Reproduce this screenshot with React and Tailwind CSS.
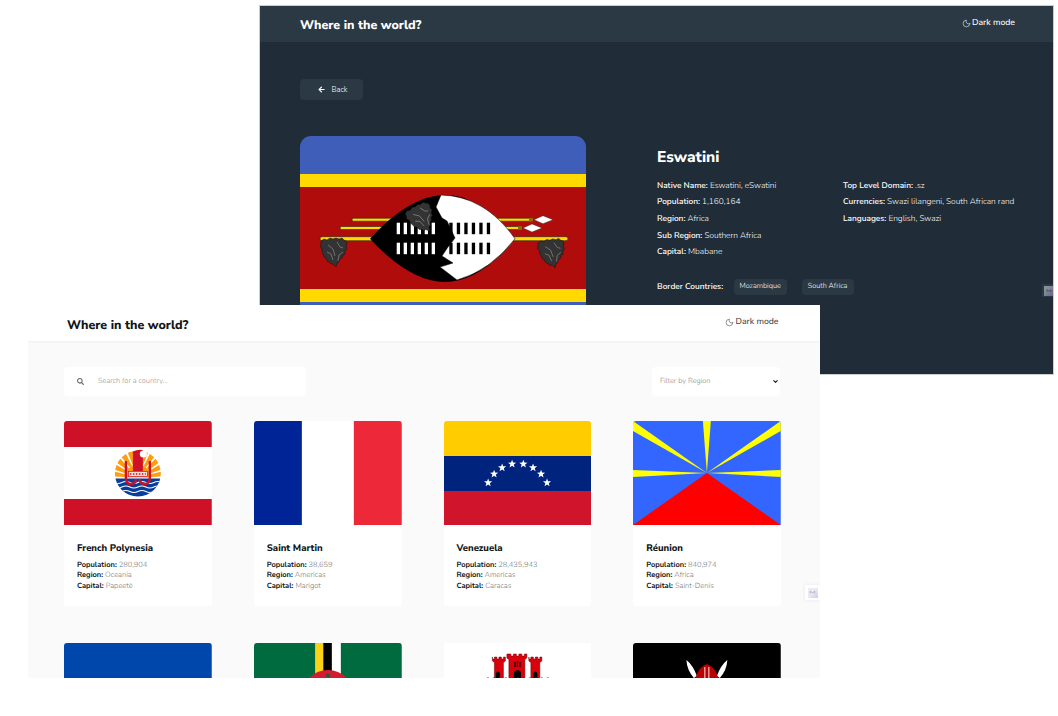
import React from 'react';
import { Moon, ChevronDown } from 'lucide-react';
import { FaArrowLeft, FaSearch } from 'react-icons/fa';

const font = "font-['Nunito_Sans','Lato','Open_Sans',sans-serif] [text-rendering:geometricPrecision]";

const countries = [
  { name: 'French Polynesia', population: '280,904', region: 'Oceania', capital: 'Papeetē', flag: 'pf' },
  { name: 'Saint Martin', population: '38,659', region: 'Americas', capital: 'Marigot', flag: 'mf' },
  { name: 'Venezuela', population: '28,435,943', region: 'Americas', capital: 'Caracas', flag: 've' },
  { name: 'Réunion', population: '840,974', region: 'Africa', capital: 'Saint-Denis', flag: 're' },
];

// second row is cut off by the window, only the flags show
const moreFlags = ['cw', 'dm', 'gi', 'ke'];

const Star = ({ x, y, r = 3.2, fill = '#fff' }) => {
  const pts = [];
  for (let i = 0; i < 10; i++) {
    const a = (Math.PI / 5) * i - Math.PI / 2;
    const rad = i % 2 === 0 ? r : r * 0.42;
    pts.push(`${x + rad * Math.cos(a)},${y + rad * Math.sin(a)}`);
  }
  return <polygon points={pts.join(' ')} fill={fill} />;
};

const sunRays = () => {
  const rays = [];
  for (let i = 0; i < 11; i++) {
    const a = Math.PI + (Math.PI * (i + 0.5)) / 11;
    const w = 0.105;
    const pt = (r, t) => `${74 + r * Math.cos(t)},${56.5 + r * Math.sin(t)}`;
    rays.push(
      <polygon key={i} points={`${pt(13, a - w)} ${pt(27, a - w)} ${pt(27, a + w)} ${pt(13, a + w)}`} fill="#ff9c10" />
    );
  }
  return rays;
};

const PolynesiaEmblem = () => (
  <>
    <clipPath id="pf-circle">
      <circle cx="74" cy="52.500" r="23" />
    </clipPath>
    <g clipPath="url(#pf-circle)">
      {sunRays()}
      <path d="M61 56.500a13 13 0 0 1 26 0z" fill="#ff9c10" />
      <rect x="50" y="57.500" width="48" height="19" fill="#083d9c" />
      <path d="M50 61.500q4 2 8 0t8 0 8 0 8 0 8 0 8 0M50 66q4 2 8 0t8 0 8 0 8 0 8 0 8 0M50 70.500q4 2 8 0t8 0 8 0 8 0 8 0 8 0" fill="none" stroke="#fff" strokeWidth="1.100" />
    </g>
    <path d="M69 30.500q5-2.500 10-1.500v21H69z" fill="#ce1126" />
    <circle cx="79.500" cy="33" r="3.600" fill="#fff" />
    <rect x="64.500" y="50.500" width="19" height="5" fill="#f5ddd0" stroke="#ce1126" strokeWidth="0.700" />
    <path d="M66 53h16" stroke="#ce1126" strokeWidth="1.500" strokeDasharray="1.500 1.500" />
    <path d="M62 40v16q0 7 5 7t5-5" fill="none" stroke="#ce1126" strokeWidth="2.400" />
    <path d="M86 40v16q0 7-5 7t-5-5" fill="none" stroke="#ce1126" strokeWidth="2.400" />
  </>
);

// all card flags share a 148x104 box
const Flag = ({ code }) => {
  let inner = null;
  if (code === 'pf') {
    inner = (
      <>
        <rect width="148" height="104" fill="#fff" />
        <rect width="148" height="26" fill="#ce1126" />
        <rect y="78" width="148" height="26" fill="#ce1126" />
        <PolynesiaEmblem />
      </>
    );
  }
  if (code === 'mf') {
    inner = (
      <>
        <rect width="48" height="104" fill="#002395" />
        <rect x="48" width="52" height="104" fill="#fff" />
        <rect x="100" width="48" height="104" fill="#ed2939" />
      </>
    );
  }
  if (code === 've') {
    const stars = [[44.200, 61.700], [50.200, 53], [58.200, 46.700], [68.200, 43], [79.500, 43], [89.200, 46.700], [97.200, 53], [103.200, 61.700]];
    inner = (
      <>
        <rect width="148" height="35" fill="#fc0" />
        <rect y="35" width="148" height="35" fill="#00247d" />
        <rect y="70" width="148" height="34" fill="#cf142b" />
        {stars.map(([x, y], i) => <Star key={i} x={x} y={y} r={4.300} />)}
      </>
    );
  }
  if (code === 're') {
    inner = (
      <>
        <rect width="148" height="104" fill="#36f" />
        <path d="M0 0L74 52L0 10zM148 0L74 52L148 10zM70 0h8L74 52zM0 49L74 52L0 56zM148 49L74 52L148 56z" fill="#ff0" />
        <path d="M0 104L74 52L148 104z" fill="#f00" />
      </>
    );
  }
  if (code === 'cw') inner = <rect width="148" height="104" fill="#0047ab" />;
  if (code === 'dm') {
    inner = (
      <>
        <rect width="148" height="104" fill="#006b3f" />
        <rect x="61.200" width="8.400" height="104" fill="#fcd116" />
        <rect x="69.600" width="8.400" height="104" fill="#000" />
        <rect x="78" width="9" height="104" fill="#fff" />
        <circle cx="74" cy="53.500" r="26.500" fill="#d41c30" />
        <Star x={74} y={32.700} r={3.200} fill="#006b3f" />
      </>
    );
  }
  if (code === 'gi') {
    inner = (
      <>
        <rect width="148" height="104" fill="#fff" />
        <g fill="#da000c" stroke="#6b0006" strokeWidth="0.500">
          <path d="M48.500 14v4l2 1.500V36h9V19.500l2-1.500v-4h-2v2h-2v-2h-2.500v2h-2v-2h-2.500v2h-2v-2z" />
          <path d="M63 11v4l2 1.500V36h16V16.500l2-1.500v-4h-2.500v2h-2.500v-2h-3v2h-2.500v-2h-3v2h-2.500v-2z" />
          <path d="M85 14v4l2 1.500V36h9V19.500l2-1.500v-4h-2v2h-2v-2h-2.500v2h-2v-2h-2.500v2h-2v-2z" />
        </g>
        <path d="M52 36v-6q2-3 4 0v6zM70 36v-7q3.500-4 7 0v7zM89.500 36v-6q2-3 4 0v6z" fill="#000" />
        <path d="M70.500 19h1.200v5h-1.200zM73 18h1.200v6H73zM75.500 19h1.200v5h-1.200z" fill="#000" />
        <path d="M43 35h62" stroke="#da000c" strokeWidth="1" strokeDasharray="2 4" />
      </>
    );
  }
  if (code === 'ke') {
    inner = (
      <>
        <rect width="148" height="104" fill="#000" />
        <path d="M53.500 17Q60 22 64 33l-3 2Q54 27 53.500 17zM94.500 17Q88 22 84 33l3 2Q94 27 94.500 17z" fill="#fff" />
        <path d="M74 21q10 4 12 17H62q2-13 12-17z" fill="#bb0000" />
        <path d="M72 24v14M76 24v14" stroke="#fff" strokeWidth="0.900" />
      </>
    );
  }
  return (
    <svg viewBox="0 0 148 104" preserveAspectRatio="none" className="block h-[104px] w-full">
      {inner}
    </svg>
  );
};

const Leaf = ({ x, y, rotate = 0 }) => (
  <g transform={`translate(${x} ${y}) rotate(${rotate})`}>
    <path d="M-11 -11l3 1 3-2 3 1 3-1 3 1 3-1 2 2 2 1 1 3-1 2 1 3-2 2 0 3-2 1-1 3-2 1-1 3-2 1-1 4-3-3-2 0-2-2-2-1-1-3-2-1-1-3-1-2 0-3-2-3 1-2 0-3z" fill="#333" stroke="#111" strokeWidth="0.500" />
    <path d="M-7 -5l5 4 2 7M2 -8l3 5 3 1M-8 2l4 2 2 6M8 2l-4 3-1 6" stroke="#8a8a8a" strokeWidth="0.700" fill="none" />
  </g>
);

const Spear = ({ y, x1, x2, head, thick = 3 }) => (
  <g>
    <rect x={x1} y={y - thick / 2} width={x2 - x1} height={thick} rx={thick / 2} fill="#ffd900" stroke="#222" strokeWidth="0.600" />
    {head && (
      <>
        <rect x={x2 - 4} y={y - 1.800} width="4" height="3.600" fill="#8a6d00" />
        <path d={`M${x2 + 1} ${y}l9 -4 10 4 -10 4z`} fill="#fff" stroke="#222" strokeWidth="0.400" />
      </>
    )}
  </g>
);

// Eswatini flag, 286x204 like the picture
const EswatiniFlag = () => {
  const bars = [0, 1, 2, 3, 4, 5];
  return (
    <svg viewBox="0 0 286 204" className="block h-[204px] w-[286px]">
      <rect width="286" height="204" fill="#3e5eb9" />
      <rect y="38" width="286" height="128" fill="#ffd900" />
      <rect y="51" width="286" height="102" fill="#b10c0c" />
      <Spear y={83.700} x1={52} x2={233} head />
      <Spear y={92} x1={40} x2={222} head />
      <Spear y={102.700} x1={20} x2={268} thick={4} />
      <path d="M70 102.700Q110 59 145 59T215 102.700Q180 146 145 146T70 102.700z" fill="#000" />
      <path d="M141 59Q185 60 215 102.700Q190 135 157 144l-17-13 13-4-11-7 6-9 7-9-8-17-5-3-6-11z" fill="#fff" stroke="#000" strokeWidth="0.500" />
      {bars.map((i) => (
        <rect key={i} x={96.700 + i * 7} y={86.700} width="3.300" height="11.500" fill="#fff" />
      ))}
      {bars.map((i) => (
        <rect key={i} x={96.700 + i * 7} y={106.700} width="3.300" height="11.500" fill="#fff" />
      ))}
      {bars.map((i) => (
        <rect key={i} x={149.300 + i * 7.500} y={86.700} width="3.300" height="11.500" fill="#000" />
      ))}
      {bars.map((i) => (
        <rect key={i} x={149.300 + i * 7.500} y={106.700} width="3.300" height="11.500" fill="#000" />
      ))}
      <Leaf x={121.700} y={80} rotate={-25} />
      <Leaf x={35} y={114} />
      <Leaf x={252.700} y={115} rotate={-5} />
    </svg>
  );
};

const Info = ({ label, value }) => (
  <p className="h-[16.600px] leading-[16.600px]">
    <span className="font-semibold">{label}:</span> <span className="font-light">{value}</span>
  </p>
);

const BadgeMark = ({ className }) => (
  <svg viewBox="0 0 10 10" className={className}>
    <path d="M2.500 6V3.500L5 5.500 7.500 3.500V6" fill="none" stroke="currentColor" strokeWidth="0.800" />
  </svg>
);

const DarkMode = ({ className }) => (
  <div className={`flex items-center gap-[1px] text-[8.700px] font-medium ${className}`}>
    <Moon className="h-[9px] w-[9px]" strokeWidth={1.500} />
    Dark mode
  </div>
);

const DarkWindow = () => (
  <div className={`absolute left-[260px] top-[6px] h-[368px] w-[793px] overflow-hidden bg-[#202c37] text-white shadow-[0_0_0_1px_#c9ced2] ${font}`}>
    <header className="flex h-[36px] items-center justify-between bg-[#2b3945] pl-[40px] pr-[38px]">
      <h1 className="pt-[5px] text-[12.500px] font-extrabold">Where in the world?</h1>
      <DarkMode className="text-white" />
    </header>
    <div className="pl-[40px] pt-[37px]">
      <button className="flex h-[21px] w-[63px] items-center justify-center gap-[6px] rounded-sm bg-[#2b3945] pl-[3px] text-[7.500px] font-light text-white">
        <FaArrowLeft className="h-[7px] w-[7px]" />
        Back
      </button>
      <div className="mt-[36px] flex gap-[71px]">
        <div className="overflow-hidden rounded-t-[11px]">
          <EswatiniFlag />
        </div>
        <div className="pt-[10px] text-[8.300px]">
          <h2 className="text-[15.500px] font-extrabold">Eswatini</h2>
          <div className="mt-[8.500px] flex">
            <div className="w-[186px]">
              <Info label="Native Name" value="Eswatini, eSwatini" />
              <Info label="Population" value="1,160,164" />
              <Info label="Region" value="Africa" />
              <Info label="Sub Region" value="Southern Africa" />
              <Info label="Capital" value="Mbabane" />
            </div>
            <div>
              <Info label="Top Level Domain" value=".sz" />
              <Info label="Currencies" value="Swazi lilangeni, South African rand" />
              <Info label="Languages" value="English, Swazi" />
            </div>
          </div>
          <div className="mt-[18px] flex items-center">
            <span className="font-semibold">Border Countries:</span>
            <span className="ml-[10.500px] flex h-[16px] w-[53px] items-center justify-center rounded-sm bg-[#2b3945] text-[7.300px] font-light">Mozambique</span>
            <span className="ml-[15px] flex h-[16px] w-[52px] items-center justify-center rounded-sm bg-[#2b3945] text-[7.300px] font-light">South Africa</span>
          </div>
        </div>
      </div>
    </div>
    <div className="absolute right-0 top-[278px] flex h-[13px] w-[11px] items-center justify-end bg-[#2b3945]">
      <div className="flex h-[10px] w-[9px] items-center justify-center bg-gradient-to-br from-[#8c93a2] via-[#7d8494] to-[#6d5a98] text-[#2b3945]">
        <BadgeMark className="h-[8px] w-[8px]" />
      </div>
    </div>
  </div>
);

const Stat = ({ label, value }) => (
  <p>
    <span className="font-bold">{label}:</span> <span className="font-light text-[#777]">{value}</span>
  </p>
);

const Card = ({ c }) => (
  <article className="h-[185px] overflow-hidden rounded-[3px] bg-white">
    <Flag code={c.flag} />
    <div className="pl-[13px] pt-[17px] text-[7.500px] leading-[10.500px] text-[#111517]">
      <h3 className="mb-[3.500px] text-[9.500px] font-extrabold leading-[14px]">{c.name}</h3>
      <Stat label="Population" value={c.population} />
      <Stat label="Region" value={c.region} />
      <Stat label="Capital" value={c.capital} />
    </div>
  </article>
);

const LightWindow = () => (
  <div className={`absolute left-[28px] top-[305px] h-[373px] w-[792px] overflow-hidden bg-[#fafafa] text-[#111517] ${font}`}>
    <header className="flex h-[36px] items-center justify-between bg-white pl-[39px] pr-[41.500px] shadow-[0_1px_2px_rgba(0,0,0,0.05)]">
      <h1 className="pt-[6px] text-[12.500px] font-extrabold">Where in the world?</h1>
      <DarkMode className="text-[#444]" />
    </header>
    <div className="pl-[36px] pr-[39px] pt-[26px]">
      <div className="flex justify-between pr-[1px]">
        <div className="flex h-[29px] w-[242px] items-center rounded-sm bg-white pl-[13px]">
          <FaSearch className="h-[7px] w-[7px] text-[#666]" />
          <span className="ml-[14px] text-[7.400px] font-light text-[#999]">Search for a country...</span>
        </div>
        <div className="flex h-[29px] w-[128px] items-center justify-between rounded-sm bg-white pl-[8px] pr-[1px]">
          <span className="text-[7.300px] font-light text-[#888]">Filter by Region</span>
          <ChevronDown className="h-[7px] w-[7px] text-[#222]" strokeWidth={4} />
        </div>
      </div>
      <div className="mt-[25px] grid grid-cols-4 gap-x-[42px] gap-y-[37px]">
        {countries.map((c) => <Card key={c.name} c={c} />)}
        {moreFlags.map((code) => (
          <article key={code} className="overflow-hidden rounded-[3px] bg-white">
            <Flag code={code} />
          </article>
        ))}
      </div>
    </div>
    <div className="absolute right-0 top-[280px] flex h-[15px] w-[15px] items-center justify-center bg-white shadow-[0_0_4px_rgba(0,0,0,0.08)]">
      <div className="flex h-[10px] w-[10px] items-center justify-center bg-gradient-to-br from-[#eceef5] via-[#e9e9f3] to-[#dcc0f2] text-[#9aa0b0]">
        <BadgeMark className="h-[9px] w-[9px]" />
      </div>
    </div>
  </div>
);

const App = () => (
  <div className="relative h-[716px] w-[1058px] overflow-hidden bg-white">
    <DarkWindow />
    <LightWindow />
  </div>
);

export default App;
